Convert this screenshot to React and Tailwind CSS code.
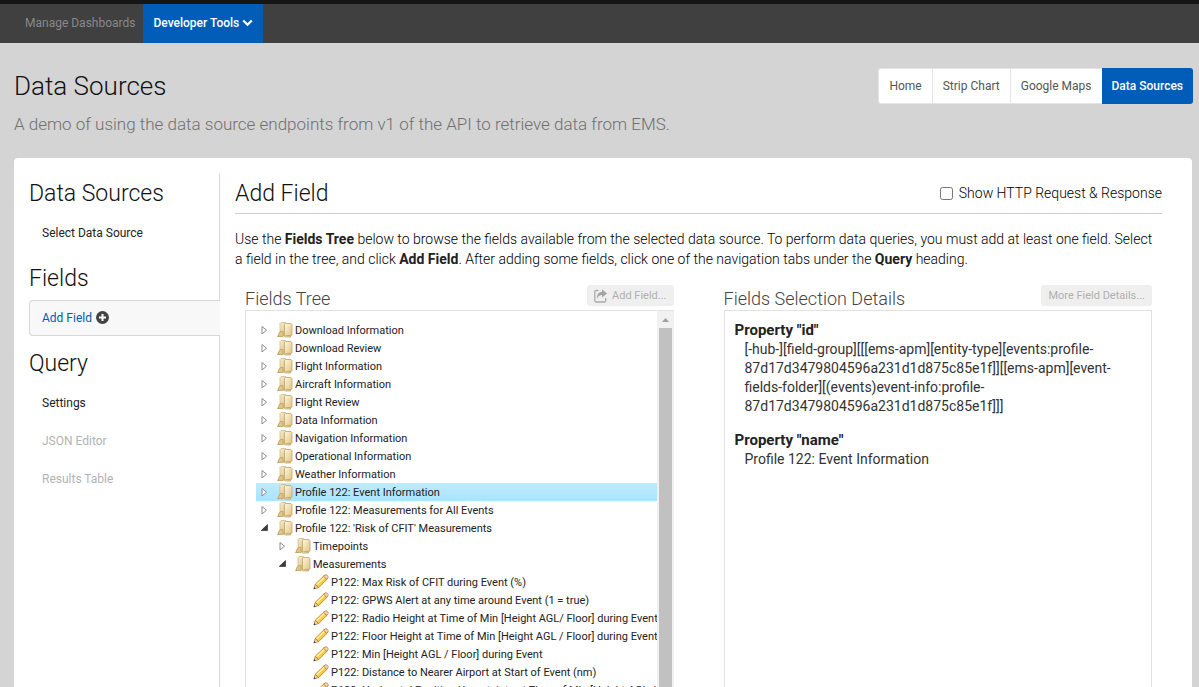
import React from 'react';

const tree = [
  { level: 0, label: 'Download Information' },
  { level: 0, label: 'Download Review' },
  { level: 0, label: 'Flight Information' },
  { level: 0, label: 'Aircraft Information' },
  { level: 0, label: 'Flight Review' },
  { level: 0, label: 'Data Information' },
  { level: 0, label: 'Navigation Information' },
  { level: 0, label: 'Operational Information' },
  { level: 0, label: 'Weather Information' },
  { level: 0, label: 'Profile 122: Event Information', selected: true },
  { level: 0, label: 'Profile 122: Measurements for All Events' },
  { level: 0, label: "Profile 122: 'Risk of CFIT' Measurements", open: true },
  { level: 1, label: 'Timepoints' },
  { level: 1, label: 'Measurements', open: true },
  { level: 2, leaf: true, label: 'P122: Max Risk of CFIT during Event (%)' },
  { level: 2, leaf: true, label: 'P122: GPWS Alert at any time around Event (1 = true)' },
  { level: 2, leaf: true, label: 'P122: Radio Height at Time of Min [Height AGL/ Floor] during Event' },
  { level: 2, leaf: true, label: 'P122: Floor Height at Time of Min [Height AGL / Floor] during Event' },
  { level: 2, leaf: true, label: 'P122: Min [Height AGL / Floor] during Event' },
  { level: 2, leaf: true, label: 'P122: Distance to Nearer Airport at Start of Event (nm)' },
  { level: 2, leaf: true, label: 'P122: Horizontal Position Uncertainty at Time of Min [Height AGL / Floor]' },
];

const indents = ['pl-0', 'pl-[18px]', 'pl-[36px]'];

function FolderIcon() {
  return (
    <svg width="16" height="16" viewBox="0 0 16 16" className="shrink-0" aria-hidden="true">
      <defs>
        <linearGradient id="folderBack" x1="0" y1="0" x2="1" y2="1">
          <stop offset="0" stopColor="#fbf6e2" />
          <stop offset="1" stopColor="#d3b66f" />
        </linearGradient>
        <linearGradient id="folderFront" x1="0" y1="0" x2="1" y2="1">
          <stop offset="0" stopColor="#fff8dd" />
          <stop offset="1" stopColor="#dfc080" />
        </linearGradient>
      </defs>
      <path d="M0 14.8 2.500 11.500V15H0z" fill="#b9b5a8" />
      <path d="M3 1.500 4 .5h4.500l.5 1V14H2V11l1-1z" fill="url(#folderBack)" stroke="#c8b179" strokeWidth=".7" />
      <path d="M1.200 14.500V13L3.500 9.500H6V14.500z" fill="#e0c588" stroke="#b8964c" strokeWidth=".6" />
      <path d="M7.500 2.500 8.500 1.500h5.500l1 1V13l-1.500.5v1.500H8.500l-1-.5z" fill="url(#folderFront)" stroke="#c0a569" strokeWidth=".8" />
      <path d="M8.500 13.500h5" stroke="#b8964c" strokeWidth=".6" />
    </svg>
  );
}

function PencilIcon() {
  return (
    <svg width="16" height="16" viewBox="0 0 16 16" className="shrink-0" aria-hidden="true">
      <path d="M1 14.800 2.200 10.400 5.600 13.600z" fill="#f5e3bd" stroke="#9a7a3a" strokeWidth=".8" />
      <path d="M2.200 10.300 10.600 2.200 13.900 5.400 5.600 13.600z" fill="#f9cd4c" stroke="#b07a20" strokeWidth=".8" />
      <path d="M3.600 10.800 11.400 3.300" stroke="#fff0a8" strokeWidth="1.500" />
      <path d="M10.600 2.200 12 1.100c.7-.5 1.400-.4 2 .1l.8.9c.5.6.5 1.300 0 1.900L13.900 5.400z" fill="#f7d8b4" stroke="#b0763a" strokeWidth=".8" />
      <path d="M.6 15.200 1.300 13.100 2.700 14.500z" fill="#3a3a3a" />
    </svg>
  );
}

function Arrow({ open }) {
  return (
    <svg width="8" height="10" viewBox="0 0 8 10" className="shrink-0" aria-hidden="true">
      {open ? (
        <path d="M7.500 1.500V7.500H1.200z" fill="#3a3a3a" stroke="#222" strokeWidth=".6" />
      ) : (
        <path d="M2 1.500V9L6.500 5.200z" fill="#fff" stroke="#8d8d8d" strokeWidth="1" />
      )}
    </svg>
  );
}

function TreeRow({ node }) {
  return (
    <li
      className={
        'h-[18px] whitespace-nowrap ' + (node.selected ? 'bg-linear-to-b from-[#beebff] to-[#a8e4ff]' : '')
      }
    >
      <span className={'flex h-full items-center ' + indents[node.level]}>
        {!node.leaf && (
          <span className="flex w-[17px] pl-1">
            <Arrow open={node.open} />
          </span>
        )}
        <span className={'flex items-center gap-[2px] ' + (node.leaf ? 'pl-[21px]' : 'pl-1')}>
          {node.leaf ? <PencilIcon /> : <FolderIcon />}
          <span className="pt-[2px] leading-4">{node.label}</span>
        </span>
      </span>
    </li>
  );
}

function SideHeading({ children }) {
  return <h2 className="pt-[2px] text-[23px] leading-[22px] font-light text-[#111]">{children}</h2>;
}

function SideLink({ children, muted }) {
  return (
    <a href="#" className={'flex h-9 items-center px-[13px] ' + (muted ? 'text-[#b3b3b3]' : 'text-[#222]')}>
      {children}
    </a>
  );
}

function Tab({ children }) {
  return (
    <a href="#" className="flex items-center border-r border-[#e5e5e5] px-2.5 text-[#555] last:border-r-0">
      {children}
    </a>
  );
}

export default function App() {
  return (
    <div className="flex h-screen flex-col overflow-hidden bg-[#d4d4d4] font-['Roboto',sans-serif] text-[#222]">
      <nav className="flex h-[43px] shrink-0 border-t-4 border-[#151515] bg-[#404040] pl-[15px] text-xs">
        <a href="#" className="flex items-center pr-2 pb-[2px] pl-2.5 text-[#888]">Manage Dashboards</a>
        <button type="button" className="flex items-center gap-[3px] bg-[#005cb9] px-2.5 pb-[2px] font-medium text-white">
          Developer Tools
          <svg width="11" height="8" viewBox="0 0 11 8" aria-hidden="true">
            <path d="M1.200 1.500 5.500 5.700 9.800 1.500" fill="none" stroke="#fff" strokeWidth="2.300" />
          </svg>
        </button>
      </nav>

      <header className="px-[14px] pt-[25px] pr-[6px]">
        <div className="flex h-9 items-center justify-between">
          <h1 className="text-[26px] font-light text-[#111]">Data Sources</h1>
          <div className="flex h-9 text-xs">
            <div className="flex rounded-l-[3px] border border-r-0 border-[#e5e5e5] bg-white">
              <Tab>Home</Tab>
              <Tab>Strip Chart</Tab>
              <Tab>Google Maps</Tab>
            </div>
            <a href="#" className="flex items-center rounded-r-[3px] bg-[#005cb9] px-2.5 font-medium text-white">
              Data Sources
            </a>
          </div>
        </div>
        <p className="mt-2 text-[17px] leading-6 font-light text-[#707070]">
          A demo of using the data source endpoints from v1 of the API to retrieve data from EMS.
        </p>
      </header>

      <div className="mt-[22px] mr-[7px] ml-[14px] flex min-h-0 flex-1 rounded-t bg-white pt-[15px] pr-[30px] pl-[15px]">
        <aside className="flex w-[191px] shrink-0 flex-col border-r border-[#d8d8d8] pt-2 text-xs">
          <SideHeading>Data Sources</SideHeading>
          <div className="mt-2.5 mb-[15px]">
            <SideLink>Select Data Source</SideLink>
          </div>
          <SideHeading>Fields</SideHeading>
          <a
            href="#"
            className="mt-2.5 -mr-px mb-[15px] flex h-9 items-center gap-1 rounded-l border border-r-0 border-[#d8d8d8] bg-[#f8f8f8] px-3 text-[#005cb9]"
          >
            Add Field
            <svg width="13" height="15" viewBox="0 0 13 15" aria-hidden="true">
              <circle cx="6.500" cy="6.500" r="6.500" fill="#444" />
              <path d="M6.500 3v7M3 6.500h7" stroke="#fff" strokeWidth="2" />
            </svg>
          </a>
          <SideHeading>Query</SideHeading>
          <div className="mt-2.5 flex flex-col gap-[2px]">
            <SideLink>Settings</SideLink>
            <SideLink muted>JSON Editor</SideLink>
            <SideLink muted>Results Table</SideLink>
          </div>
        </aside>

        <main className="ml-[15px] flex min-w-0 flex-1 flex-col text-sm">
          <div className="flex h-[41px] shrink-0 items-center justify-between border-b border-[#d0d0d0]">
            <h2 className="pt-[2px] text-[23px] font-light text-[#111]">Add Field</h2>
            <label className="flex items-center gap-[6px] font-light text-black">
              <input type="checkbox" className="h-[13px] w-[13px]" />
              Show HTTP Request &amp; Response
            </label>
          </div>
          <p className="mt-[15px] shrink-0 leading-5 font-light text-black">
            Use the <b className="font-bold text-[#222]">Fields Tree</b> below to browse the fields available from the
            selected data source. To perform data queries, you must add at least one field. Select a field in the tree,
            and click <b className="font-bold text-[#222]">Add Field</b>. After adding some fields, click one of the
            navigation tabs under the <b className="font-bold text-[#222]">Query</b> heading.
          </p>

          <div className="mt-4 grid min-h-0 flex-1 grid-cols-2 gap-[50px] px-2.5">
            <section className="flex min-h-0 min-w-0 flex-col">
              <div className="flex h-[25px] shrink-0 items-start justify-between">
                <h3 className="pt-1 text-lg leading-5 font-light text-[#444]">Fields Tree</h3>
                <button
                  type="button"
                  disabled
                  className="flex h-[21px] items-center gap-[5px] rounded-[3px] bg-[#efefef] px-[7px] text-[11px] text-[#b0b0b0]"
                >
                  <svg width="13" height="14" viewBox="0 0 13 14" aria-hidden="true">
                    <path d="M4.500 1.500H2.300A1.500 1.500 0 0 0 .8 3v8.500A1.500 1.500 0 0 0 2.300 13h7.900a1.500 1.500 0 0 0 1.500-1.500V9" fill="none" stroke="#aaa" strokeWidth="1.300" />
                    <path d="M8 .3 13 4.400 8 8.500V6C5.500 6 4 7 3 10 2.600 5.800 4.500 3.100 8 2.800z" fill="#a4a4a4" />
                  </svg>
                  Add Field...
                </button>
              </div>
              <div className="flex min-h-0 flex-1 border-t border-l border-[#e2e2e2]">
                <ul className="min-w-0 flex-1 overflow-hidden pt-2.5 pl-2.5 text-[11px] text-[#222]">
                  {tree.map((node) => (
                    <TreeRow key={node.label} node={node} />
                  ))}
                </ul>
                <div className="flex w-[17px] shrink-0 flex-col items-center bg-[#f1f1f1] px-[2px]">
                  <svg width="13" height="17" viewBox="0 0 13 17" className="shrink-0" aria-hidden="true">
                    <path d="M3 11h7L6.500 7z" fill="#a0a0a0" />
                  </svg>
                  <div className="w-full flex-1 bg-[#c1c1c1]" />
                </div>
              </div>
            </section>

            <section className="flex min-h-0 min-w-0 flex-col">
              <div className="flex h-[25px] shrink-0 items-start justify-between">
                <h3 className="pt-1 text-lg leading-5 font-light text-[#444]">Fields Selection Details</h3>
                <button
                  type="button"
                  disabled
                  className="flex h-[21px] items-center rounded-[3px] bg-[#efefef] px-[7px] text-[11px] text-[#b0b0b0]"
                >
                  More Field Details...
                </button>
              </div>
              <dl className="min-h-0 flex-1 overflow-hidden border-x border-t border-[#e2e2e2] px-2.5 pt-2.5 leading-[19px]">
                <dt className="text-[15px] font-bold">Property "id"</dt>
                <dd className="mb-[15px] pl-2.5 text-[#333]">
                  [-hub-][field-group][[[ems-apm][entity-type][events:profile-
                  <br />
                  87d17d3479804596a231d1d875c85e1f]][[ems-apm][event-
                  <br />
                  fields-folder][(events)event-info:profile-
                  <br />
                  87d17d3479804596a231d1d875c85e1f]]]
                </dd>
                <dt className="text-[15px] font-bold">Property "name"</dt>
                <dd className="pl-2.5 text-[#333]">Profile 122: Event Information</dd>
              </dl>
            </section>
          </div>
        </main>
      </div>
    </div>
  );
}
